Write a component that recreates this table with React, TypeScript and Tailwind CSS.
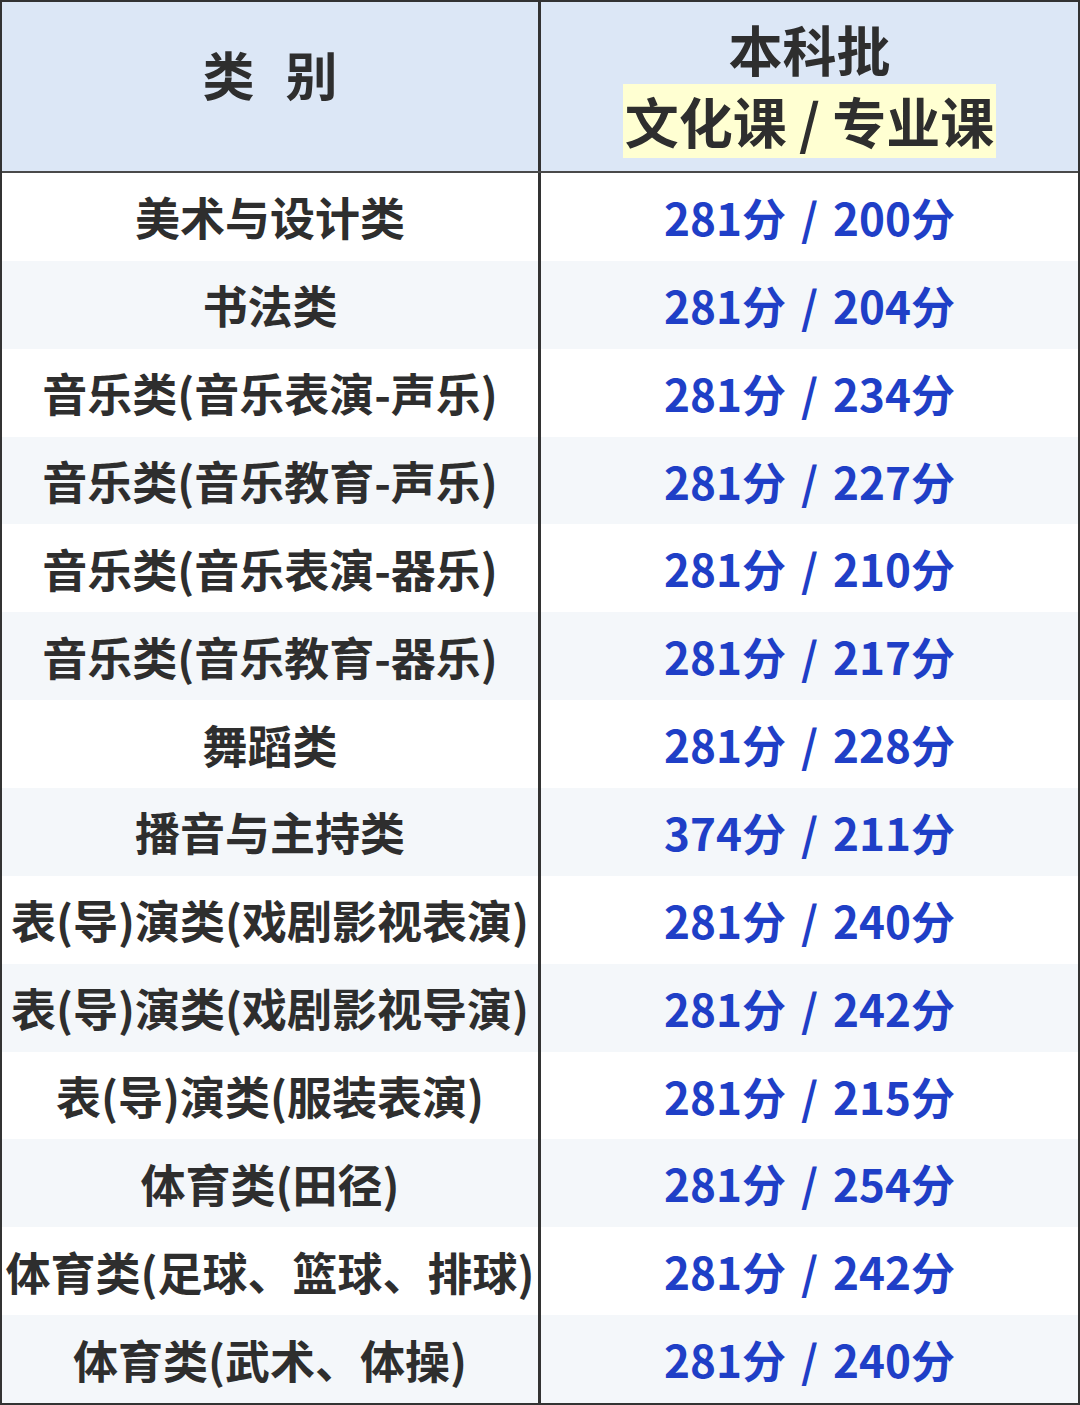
import React from "react";

const rows: [string, string, string][] = [
  ["美术与设计类", "281", "200"],
  ["书法类", "281", "204"],
  ["音乐类(音乐表演-声乐)", "281", "234"],
  ["音乐类(音乐教育-声乐)", "281", "227"],
  ["音乐类(音乐表演-器乐)", "281", "210"],
  ["音乐类(音乐教育-器乐)", "281", "217"],
  ["舞蹈类", "281", "228"],
  ["播音与主持类", "374", "211"],
  ["表(导)演类(戏剧影视表演)", "281", "240"],
  ["表(导)演类(戏剧影视导演)", "281", "242"],
  ["表(导)演类(服装表演)", "281", "215"],
  ["体育类(田径)", "281", "254"],
  ["体育类(足球、篮球、排球)", "281", "242"],
  ["体育类(武术、体操)", "281", "240"],
];

export default function App() {
  return (
    <div
      className="w-[1080px] h-[1405px] bg-white flex flex-col border-2 border-[#333333] text-[#2e2e2e] font-bold"
      style={{ fontFamily: '"Noto Sans CJK SC", "Noto Sans", sans-serif' }}
    >
      <div className="flex h-[171px] shrink-0 border-b-2 border-[#4a4a4a] bg-[#dce7f6]">
        <div className="w-[539px] shrink-0 border-r-[3px] border-[#333333] flex items-start justify-center pt-[38px] gap-[31px] text-[52px] leading-[68px]">
          <span>类</span>
          <span>别</span>
        </div>
        <div className="flex-1 flex flex-col items-center">
          <div className="mt-[16px] h-[62px] text-[54px] leading-[62px]">本科批</div>
          <div className="mt-[4px] h-[74px] bg-[#ffffd2] px-[2px] text-[54px] leading-[74px] whitespace-nowrap">
            文化课 / 专业课
          </div>
        </div>
      </div>
      <div className="flex-1 flex flex-col">
        {rows.map(([name, a, b], i) => (
          <div
            key={i}
            className={`flex-1 flex ${i % 2 === 1 ? "bg-[#f4f7fa]" : "bg-white"}`}
          >
            <div className="w-[539px] shrink-0 border-r-[3px] border-[#333333] flex items-center justify-center text-[45px] leading-none whitespace-nowrap">
              {name}
            </div>
            <div className="flex-1 flex items-center justify-center text-[44px] leading-none whitespace-nowrap text-[#1f3fc7]">
              <span>{a}分</span>
              <span className="mx-[15px]">/</span>
              <span>{b}分</span>
            </div>
          </div>
        ))}
      </div>
    </div>
  );
}
